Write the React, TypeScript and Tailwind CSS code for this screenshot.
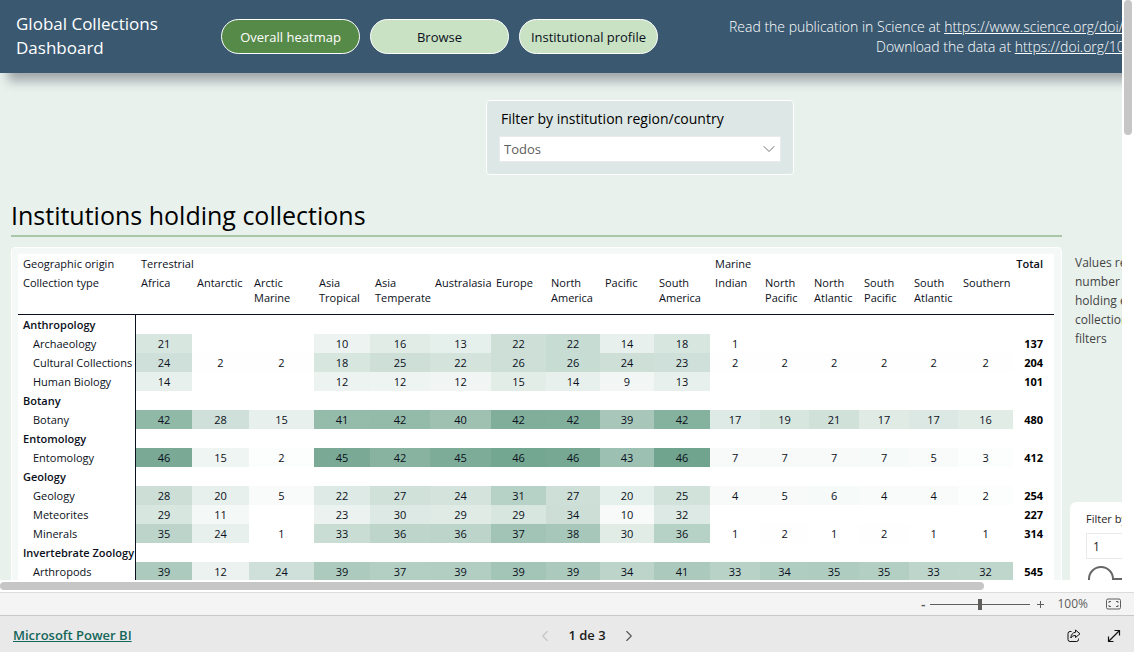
import { ChevronDown, ChevronLeft, ChevronRight } from "lucide-react";

type Cell = [value: number, shade: number] | null;

type TableRow = {
  label: string;
  group?: boolean;
  cells?: Cell[];
  total?: number;
};

const columns = [
  { name: "Africa", width: "w-[56px]" },
  { name: "Antarctic", width: "w-[57px]" },
  { name: "Arctic Marine", width: "w-[65px]" },
  { name: "Asia Tropical", width: "w-[56px]" },
  { name: "Asia Temperate", width: "w-[60px]" },
  { name: "Australasia", width: "w-[61px]" },
  { name: "Europe", width: "w-[55px]" },
  { name: "North America", width: "w-[54px]" },
  { name: "Pacific", width: "w-[54px]" },
  { name: "South America", width: "w-[56px]" },
  { name: "Indian", width: "w-[50px]" },
  { name: "North Pacific", width: "w-[49px]" },
  { name: "North Atlantic", width: "w-[50px]" },
  { name: "South Pacific", width: "w-[50px]" },
  { name: "South Atlantic", width: "w-[49px]" },
  { name: "Southern", width: "w-[55px]" },
];

const rows: TableRow[] = [
  { label: "Anthropology", group: true },
  {
    label: "Archaeology",
    cells: [[21, 28], null, null, [10, 13], [16, 21], [13, 18], [22, 35], [22, 39], [14, 17], [18, 27], [1, 0], null, null, null, null, null],
    total: 137,
  },
  {
    label: "Cultural Collections",
    cells: [[24, 34], [2, 1], [2, 1], [18, 27], [25, 35], [22, 30], [26, 35], [26, 39], [24, 35], [23, 34], [2, 1], [2, 1], [2, 1], [2, 1], [2, 1], [2, 1]],
    total: 204,
  },
  {
    label: "Human Biology",
    cells: [[14, 16], null, null, [12, 13], [12, 12], [12, 10], [15, 20], [14, 17], [9, 9], [13, 17], null, null, null, null, null, null],
    total: 101,
  },
  { label: "Botany", group: true },
  {
    label: "Botany",
    cells: [[42, 77], [28, 34], [15, 17], [41, 74], [42, 75], [40, 68], [42, 89], [42, 88], [39, 61], [42, 85], [17, 23], [19, 27], [21, 33], [17, 22], [17, 25], [16, 21]],
    total: 480,
  },
  { label: "Entomology", group: true },
  {
    label: "Entomology",
    cells: [[46, 93], [15, 11], [2, 2], [45, 93], [42, 84], [45, 91], [46, 97], [46, 96], [43, 69], [46, 100], [7, 5], [7, 5], [7, 5], [7, 6], [5, 4], [3, 2]],
    total: 412,
  },
  { label: "Geology", group: true },
  {
    label: "Geology",
    cells: [[28, 36], [20, 17], [5, 4], [22, 23], [27, 33], [24, 30], [31, 51], [27, 35], [20, 18], [25, 32], [4, 5], [5, 5], [6, 6], [4, 4], [4, 4], [2, 2]],
    total: 254,
  },
  {
    label: "Meteorites",
    cells: [[29, 28], [11, 8], null, [23, 14], [30, 24], [29, 22], [29, 28], [34, 36], [10, 5], [32, 24], null, null, null, null, null, null],
    total: 227,
  },
  {
    label: "Minerals",
    cells: [[35, 47], [24, 17], [1, 0], [33, 37], [36, 46], [36, 47], [37, 65], [38, 62], [30, 21], [36, 51], [1, 0], [2, 1], [1, 0], [2, 1], [1, 0], [1, 0]],
    total: 314,
  },
  { label: "Invertebrate Zoology", group: true },
  {
    label: "Arthropods",
    cells: [[39, 58], [12, 14], [24, 34], [39, 58], [37, 53], [39, 54], [39, 64], [39, 59], [34, 47], [41, 59], [33, 50], [34, 55], [35, 56], [35, 53], [33, 46], [32, 45]],
    total: 545,
  },
];

const noteLines = [
  "Values represent the",
  "number of institutions",
  "holding each type of",
  "collection given the",
  "filters",
];

// Blends from white to the darkest green of the heatmap
const heatColor = (shade: number) => {
  const mix = (end: number) => Math.round(255 + ((end - 255) * shade) / 100);
  return `rgb(${mix(112)}, ${mix(164)}, ${mix(142)})`;
};

const TabButton = ({ label, active }: { label: string; active?: boolean }) => (
  <button
    type="button"
    className={`h-[35px] w-[139px] rounded-full border border-white pt-0.5 text-[13px] whitespace-nowrap ${
      active ? "bg-[#568a49] text-white" : "bg-[#c8e2c3] text-[#0b1020]"
    }`}
  >
    {label}
  </button>
);

const Header = () => (
  <header className="flex h-[73px] bg-[#3a5971] pl-4 text-white shadow-[8px_8px_10px_#a0a7aa]">
    <div className="w-[205px] pt-3 text-[17px] leading-6 font-medium">
      Global Collections
      <br />
      Dashboard
    </div>
    <nav className="flex gap-2.5 pt-[19px]">
      <TabButton label="Overall heatmap" active />
      <TabButton label="Browse" />
      <TabButton label="Institutional profile" />
    </nav>
    <div className="pt-[17px] pl-[71px] text-sm leading-5 font-light whitespace-nowrap">
      <p>
        Read the publication in Science at{" "}
        <a href="#science" className="underline">
          https://www.science.org/doi/10.1126/science
        </a>
      </p>
      <p className="pl-[147px]">
        Download the data at{" "}
        <a href="#data" className="underline">
          https://doi.org/10.5281/zenodo
        </a>
      </p>
    </div>
  </header>
);

const RegionFilter = () => (
  <div className="mx-auto mt-[27px] h-[75px] w-[308px] rounded border border-white bg-[#dde7e5] px-3 pt-2">
    <label htmlFor="region" className="block pl-0.5 text-sm leading-5 text-black">
      Filter by institution region/country
    </label>
    <div className="relative mt-[7px]">
      <select
        id="region"
        className="block h-[26px] w-full appearance-none border border-[#eaeaea] bg-white pt-0.5 pl-1 text-[13px] text-[#605e5c]"
      >
        <option>Todos</option>
      </select>
      <ChevronDown
        size={20}
        strokeWidth={1}
        className="pointer-events-none absolute top-[3px] right-0.5 text-[#555]"
      />
    </div>
  </div>
);

const HeatmapTable = () => (
  <table className="w-full table-fixed border-separate border-spacing-0 bg-white text-[11px] leading-[15px] text-[#0b1020]">
    <colgroup>
      <col className="w-[118px]" />
      {columns.map((column) => (
        <col key={column.name} className={column.width} />
      ))}
      <col />
    </colgroup>
    <thead className="text-left align-top">
      <tr className="h-[19px]">
        <th className="pt-[2px] pl-[5px] font-normal">Geographic origin</th>
        <th colSpan={10} className="pt-[2px] pl-[5px] font-normal">
          Terrestrial
        </th>
        <th colSpan={6} className="pt-[2px] pl-[5px] font-normal">
          Marine
        </th>
        <th className="pt-[2px] pr-[11px] text-right font-semibold">Total</th>
      </tr>
      <tr className="h-[42px]">
        <th className="border-b border-[#0b1020] pt-[2px] pl-[5px] font-normal">Collection type</th>
        {columns.map((column) => (
          <th key={column.name} className="border-b border-[#0b1020] pt-[2px] pl-[5px] font-normal">
            {column.name}
          </th>
        ))}
        <th className="border-b border-[#0b1020]" />
      </tr>
    </thead>
    <tbody>
      {rows.map((row) => (
        <tr key={`${row.label}-${row.group}`} className="h-[19px]">
          <th
            className={`border-r border-[#0b1020] text-left whitespace-nowrap ${
              row.group ? "pl-[5px] font-semibold" : "pl-[15px] font-normal"
            }`}
          >
            {row.label}
          </th>
          {columns.map((column, i) => {
            const cell = row.cells?.[i];
            return (
              <td
                key={column.name}
                className="text-center"
                style={cell ? { backgroundColor: heatColor(cell[1]) } : undefined}
              >
                {cell?.[0]}
              </td>
            );
          })}
          <td className="pr-[11px] text-right font-bold text-black">{row.total}</td>
        </tr>
      ))}
    </tbody>
  </table>
);

const SidePanel = () => (
  <aside className="flex-1 pt-1.5 pr-4">
    <p className="pl-[5px] text-xs leading-[19px] whitespace-nowrap text-[#444]">
      {noteLines.map((line) => (
        <span key={line} className="block">
          {line}
        </span>
      ))}
    </p>
    <div className="mt-[154px] rounded-md bg-white px-4 pt-2 pb-6">
      <label htmlFor="minimum" className="block text-[11px] leading-[18px] whitespace-nowrap text-[#252423]">
        Filter by number
      </label>
      <input
        id="minimum"
        defaultValue="1"
        className="mt-[5px] block h-[26px] w-full border border-[#eaeaea] pl-1.5 text-xs text-[#252423]"
      />
      <input
        type="range"
        aria-label="Filter by number"
        defaultValue={0}
        className="mt-[7px] ml-0.5 block h-[26px] w-full appearance-none bg-[linear-gradient(#666,#666)] bg-[length:100%_3px] bg-center bg-no-repeat [&::-webkit-slider-thumb]:size-[26px] [&::-webkit-slider-thumb]:appearance-none [&::-webkit-slider-thumb]:rounded-full [&::-webkit-slider-thumb]:border-2 [&::-webkit-slider-thumb]:border-[#666] [&::-webkit-slider-thumb]:bg-white"
      />
    </div>
  </aside>
);

const ZoomBar = () => (
  <div className="flex h-[23px] items-center justify-end border-t border-[#dcdcdc] bg-[#f4f4f4] pr-[13px] text-[#605e5c]">
    <button type="button" className="text-sm leading-none font-semibold">
      -
    </button>
    <input
      type="range"
      aria-label="Zoom"
      defaultValue={50}
      className="mr-1 ml-[5px] h-3 w-[100px] appearance-none bg-[linear-gradient(#605e5c,#605e5c)] bg-[length:100%_1px] bg-center bg-no-repeat [&::-webkit-slider-thumb]:h-[11px] [&::-webkit-slider-thumb]:w-1 [&::-webkit-slider-thumb]:appearance-none [&::-webkit-slider-thumb]:bg-[#605e5c]"
    />
    <button type="button" aria-label="Zoom in" className="ml-0.5">
      <svg width="9" height="9" viewBox="0 0 9 9" fill="none" stroke="currentColor">
        <path d="M1 4.5h7M4.5 1v7" />
      </svg>
    </button>
    <span className="ml-3 text-xs">100%</span>
    <button type="button" aria-label="Fit to page" className="ml-[18px]">
      <svg width="15" height="12" viewBox="0 0 15 12" fill="none" stroke="currentColor">
        <rect x="0.5" y="1" width="14" height="10" rx="1.5" />
        <path d="M3 5V3.5h2M10 3.5h2V5M12 7v1.500h-2M5 8.500H3V7" />
      </svg>
    </button>
  </div>
);

const Footer = () => (
  <footer className="grid h-[37px] grid-cols-3 items-center border-t border-[#c8c8c8] bg-[#e9e9e9] pt-[3px] pr-[13px] pl-[13px]">
    <a href="#powerbi" className="justify-self-start text-[13px] font-semibold text-[#14665b] underline">
      Microsoft Power BI
    </a>
    <div className="flex items-center justify-self-center pl-10 text-[13px] font-semibold text-[#1b1b1b]">
      <button type="button" aria-label="Previous page" className="text-[#c4c4c4]">
        <ChevronLeft size={18} strokeWidth={1.5} />
      </button>
      <span className="px-3.5">1 de 3</span>
      <button type="button" aria-label="Next page" className="text-[#555]">
        <ChevronRight size={18} strokeWidth={1.5} />
      </button>
    </div>
    <div className="flex items-center gap-[26px] justify-self-end text-[#111]">
      <button type="button" aria-label="Share">
        <svg width="14" height="14" viewBox="0 0 14 14" fill="none" stroke="currentColor" strokeLinejoin="round">
          <path d="M4.500 2.500H3a2 2 0 0 0-2 2v6a2 2 0 0 0 2 2h6.500a2 2 0 0 0 2-2V9.500" />
          <path d="M8.500 1l4.500 3.800-4.500 3.700V6.500C6.300 6.500 4.900 7.200 3.800 9c.2-3.300 1.900-5.500 4.700-5.700z" />
        </svg>
      </button>
      <button type="button" aria-label="Full screen">
        <svg width="14" height="14" viewBox="0 0 14 14" fill="none" stroke="currentColor" strokeWidth="1.200">
          <path d="M1.500 12.500l11-11M7.500 1.500h5v5M1.500 7.500v5h5" />
        </svg>
      </button>
    </div>
  </footer>
);

export default function App() {
  return (
    <div className="flex h-screen flex-col bg-white font-['Open_Sans','Noto_Sans',sans-serif]">
      <div className="flex min-h-0 flex-1">
        <div className="flex-1 overflow-auto bg-[#e8f1ec] [scrollbar-width:none]">
          <div className="min-h-[720px] min-w-[1280px]">
            <Header />
            <RegionFilter />
            <div className="pl-[11px]">
              <h1 className="mt-5 w-[1051px] border-b-2 border-[#a9c7a6] text-[25px] leading-10 text-black">
                Institutions holding collections
              </h1>
              <div className="mt-2.5 flex gap-2">
                <section className="w-[1051px] rounded border border-white bg-[#f4f8f6] p-1.5 pr-[7px]">
                  <HeatmapTable />
                </section>
                <SidePanel />
              </div>
            </div>
          </div>
        </div>
        <div className="w-3 px-0.5">
          <div className="h-[135px] rounded-full bg-[#c6c6c6]" />
        </div>
      </div>
      <div className="h-3 py-0.5">
        <div className="h-2 w-[984px] rounded-full bg-[#c6c6c6]" />
      </div>
      <ZoomBar />
      <Footer />
    </div>
  );
}
